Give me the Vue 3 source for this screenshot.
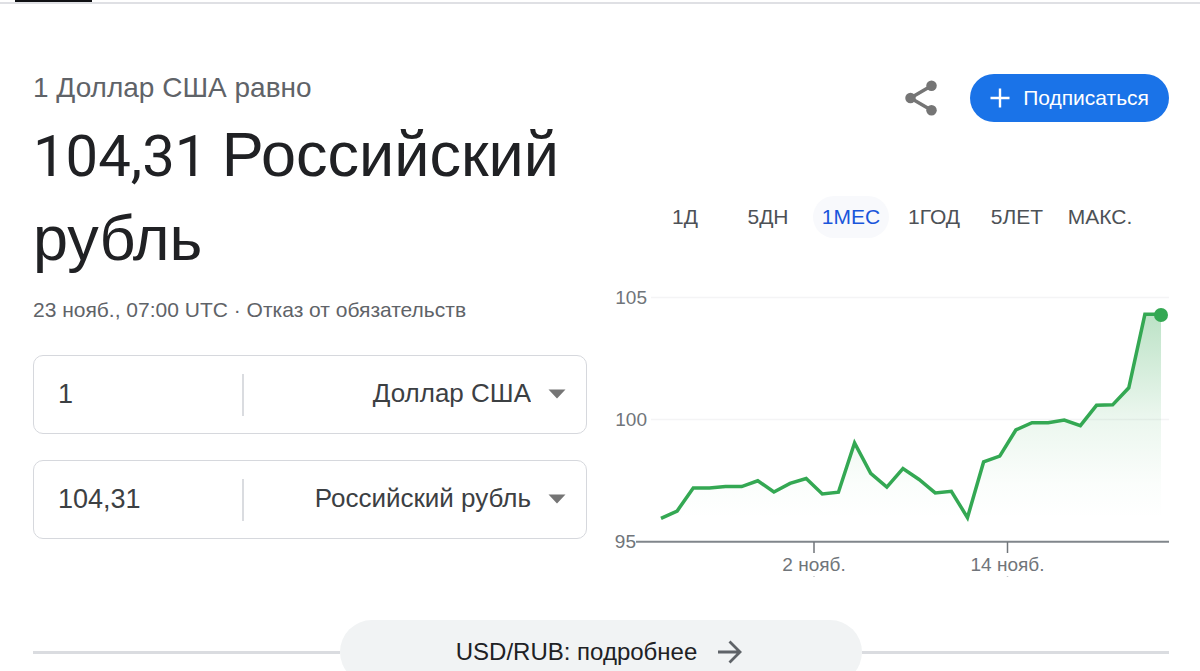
<template>
  <div class="page">
    <div class="top-bar">
      <div class="active-tab"></div>
    </div>

    <main class="converter">
      <section class="left">
        <div class="equals">1 Доллар США равно</div>
        <h1 class="result">
          <span class="digits">104,31 </span><span>Российский</span> <span>рубль</span>
        </h1>
        <div class="updated">
          23 нояб., 07:00 UTC · <a href="#" class="disclaimer">Отказ от обязательств</a>
        </div>

        <div class="fields">
          <div v-for="field in fields" :key="field.id" class="field">
            <input
              v-model="field.amount"
              type="text"
              class="amount"
              :aria-label="'Сумма: ' + field.currency"
            />
            <div class="currency">
              <select v-model="field.currency" class="select" aria-label="Валюта">
                <option v-for="c in currencies" :key="c">{{ c }}</option>
              </select>
              <svg class="arrow" width="18" height="10" viewBox="0 0 18 10">
                <path d="M0.500 0.500h17L9 9.500z" fill="#757575" />
              </svg>
            </div>
          </div>
        </div>
      </section>

      <section class="right">
        <div class="actions">
          <button class="share-btn" aria-label="Поделиться">
            <svg width="42" height="42" viewBox="0 0 24 24">
              <path d="M18 5L6 12l12 7" fill="none" stroke="#757575" stroke-width="2" />
              <circle cx="18" cy="5" r="3" fill="#757575" />
              <circle cx="6" cy="12" r="3" fill="#757575" />
              <circle cx="18" cy="19" r="3" fill="#757575" />
            </svg>
          </button>
          <button class="follow-btn">
            <svg width="20" height="20" viewBox="0 0 20 20">
              <path d="M10 0.500v19M0.500 10h19" stroke="#fff" stroke-width="2.4" />
            </svg>
            Подписаться
          </button>
        </div>

        <div class="periods">
          <button
            v-for="p in periods"
            :key="p"
            class="period"
            :class="{ active: p === period }"
            @click="period = p"
          >
            {{ p }}
          </button>
        </div>

        <svg class="chart" viewBox="0 0 554 310">
          <defs>
            <linearGradient id="area" x1="0" y1="44" x2="0" y2="271" gradientUnits="userSpaceOnUse">
              <stop offset="0" stop-color="#34a853" stop-opacity="0.33" />
              <stop offset="0.45" stop-color="#34a853" stop-opacity="0.1" />
              <stop offset="0.75" stop-color="#34a853" stop-opacity="0.02" />
              <stop offset="0.9" stop-color="#34a853" stop-opacity="0" />
            </linearGradient>
          </defs>
          <path d="M36 27.5H554M36 149.5H554" stroke="#f4f4f5" stroke-width="1.5" />
          <polygon :points="areaPoints" fill="url(#area)" />
          <path d="M21 271.7H554" stroke="#80868b" stroke-width="2" />
          <g class="axis">
            <text x="32" y="34" text-anchor="end">105</text>
            <text x="32" y="156" text-anchor="end">100</text>
            <text x="21" y="278" text-anchor="end">95</text>
            <g v-for="tick in ticks" :key="tick.label">
              <path :d="`M${tick.x} 272v11`" stroke="#70757a" stroke-width="1.5" />
              <path :d="`M${tick.x} 306v1`" stroke="#c4c7ca" stroke-width="1.5" />
              <text :x="tick.x" y="301" text-anchor="middle">{{ tick.label }}</text>
            </g>
          </g>
          <polyline :points="linePoints" fill="none" stroke="#34a853" stroke-width="3.5" />
          <circle cx="546" cy="45" r="7" fill="#34a853" />
        </svg>
      </section>
    </main>

    <div class="more">
      <a href="#" class="more-link">
        USD/RUB: подробнее
        <svg width="24" height="24" viewBox="0 0 24 24">
          <path d="M0 12h22M11.500 1.500L22 12 11.500 22.500" fill="none" stroke="#5f6368" stroke-width="2.800" />
        </svg>
      </a>
    </div>
  </div>
</template>

<script setup>
import { ref, computed } from "vue";

const currencies = ["Доллар США", "Российский рубль"];
const fields = ref([
  { id: 1, amount: "1", currency: "Доллар США" },
  { id: 2, amount: "104,31", currency: "Российский рубль" },
]);

const periods = ["1Д", "5ДН", "1МЕС", "1ГОД", "5ЛЕТ", "МАКС."];
const period = ref("1МЕС");

const rates = [
  95.95, 96.25, 97.19, 97.19, 97.25, 97.25, 97.49, 97.03, 97.38, 97.58, 96.95,
  97.02, 99.04, 97.79, 97.23, 97.99, 97.54, 96.99, 97.06, 95.98, 98.26, 98.5,
  99.57, 99.87, 99.87, 99.98, 99.75, 100.58, 100.6, 101.3, 104.31, 104.31,
];
const ticks = [
  { x: 199, label: "2 нояб." },
  { x: 392.5, label: "14 нояб." },
];

// 46px is the first day, the bottom axis is 95
const linePoints = computed(() =>
  rates
    .map((rate, i) => `${46 + i * 16.13},${271.5 - (rate - 95) * 24.4}`)
    .join(" ")
);
const areaPoints = computed(() => `46,271 ${linePoints.value} 546,271`);
</script>

<style>
body {
  margin: 0;
  background-color: #ffffff;
}
</style>

<style scoped>
.page {
  height: 100vh;
  overflow: hidden;
  font-family: "Liberation Sans", Arial, sans-serif;
  color: #202124;
}
button,
input,
select {
  font-family: inherit;
  border: none;
  background-color: transparent;
  padding: 0;
  margin: 0;
}
button {
  cursor: pointer;
}
a {
  text-decoration: none;
}
svg {
  display: block;
}
.top-bar {
  height: 2px;
  padding-left: 15px;
  border-bottom: 2px solid #dfe0e4;
}
.active-tab {
  width: 77px;
  height: 2px;
  background-color: #101114;
}
.converter {
  display: grid;
  grid-template-columns: 1fr 1fr;
  gap: 28px;
  padding: 62px 31px 0 33px;
}
.equals {
  font-size: 28px;
  line-height: 44px;
  color: #5f6368;
}
.result {
  margin: 2px 0 16px;
  font-size: 63px;
  line-height: 84px;
  font-weight: 400;
}
.digits {
  font-family: Roboto, sans-serif;
  font-size: 58px;
  line-height: 1;
}
.updated {
  font-size: 21px;
  line-height: 28px;
  color: #5f6368;
}
.disclaimer {
  color: inherit;
}
.fields {
  display: flex;
  flex-direction: column;
  gap: 26px;
  margin-top: 31px;
}
.field {
  display: flex;
  align-items: center;
  height: 79px;
  box-sizing: border-box;
  border: 1px solid #d6d8dd;
  border-radius: 10px;
}
.amount {
  width: 38%;
  box-sizing: border-box;
  height: 42px;
  padding-left: 24px;
  font-size: 27px;
  color: #3c4043;
  border-right: 2px solid #dadce0;
}
.currency {
  flex: 1;
  position: relative;
}
.select {
  width: 100%;
  height: 42px;
  padding: 0 55px 4px 0;
  appearance: none;
  text-align-last: right;
  font-size: 26px;
  color: #3c4043;
}
.arrow {
  position: absolute;
  right: 20px;
  top: 15px;
  pointer-events: none;
}
.actions {
  display: flex;
  justify-content: flex-end;
  align-items: center;
  gap: 28px;
  margin-top: 8px;
}
.follow-btn {
  display: flex;
  align-items: center;
  gap: 13px;
  height: 48px;
  padding: 0 20px;
  border-radius: 24px;
  background-color: #1a73e8;
  color: #ffffff;
  font-size: 21px;
}
.periods {
  display: grid;
  grid-template-columns: repeat(6, 1fr);
  gap: 7px;
  margin: 74px 31px 0 32px;
}
.period {
  height: 42px;
  border-radius: 21px;
  font-size: 21px;
  color: #4d5156;
}
.period.active {
  background-color: #f8f9fc;
  color: #1a56db;
}
.chart {
  width: 100%;
  margin-top: 32px;
}
.axis {
  font-size: 19px;
  fill: #70757a;
}
.more {
  display: flex;
  align-items: center;
  margin-top: 40px;
  padding: 0 31px 0 33px;
}
.more::before,
.more::after {
  content: "";
  flex: 1;
  height: 3px;
  background-color: #dadce0;
}
.more-link {
  display: flex;
  align-items: center;
  gap: 21px;
  height: 64px;
  padding: 0 120px 0 116px;
  border-radius: 32px;
  background-color: #f1f3f4;
  color: #202124;
  font-size: 24px;
}
</style>
